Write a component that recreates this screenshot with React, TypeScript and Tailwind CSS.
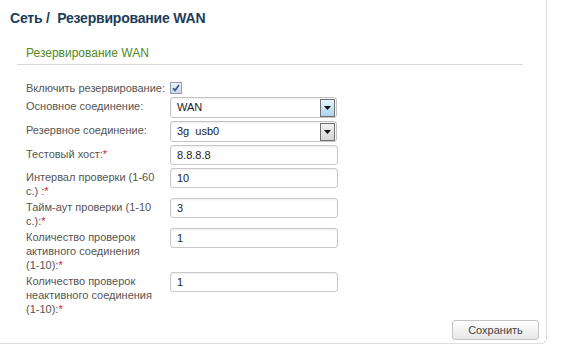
import { type ReactNode } from 'react'

const FONT = { fontFamily: '"Liberation Sans", Arial, sans-serif' }

function Req() {
  return <span className="text-[#d0203a]">*</span>
}

function Row({ label, children }: { label: ReactNode; children: ReactNode }) {
  return (
    <div className="flex items-start">
      <div className="-mb-[2px] w-[140px] shrink-0 pt-[3px] text-[11px] leading-[14px] text-[#555]">
        {label}
      </div>
      <div className="my-[1px] ml-[4px]">{children}</div>
    </div>
  )
}

function TextInput({ value }: { value: string }) {
  return (
    <div className="flex h-[20px] w-[168px] items-center rounded-[3px] border border-[#c9c9c9] bg-white px-[6px] text-[11px] text-[#222] shadow-[inset_0_1px_2px_rgba(0,0,0,0.08)]">
      {value}
    </div>
  )
}

function Select({ value, active }: { value: string; active?: boolean }) {
  return (
    <div className="flex h-[21px] w-[167px] items-center rounded-[3px] border border-[#c4c4c4] bg-white pl-[6px] pr-[1px] text-[11px] text-[#222] shadow-[inset_0_1px_2px_rgba(0,0,0,0.08)]">
      <span className="flex-1 whitespace-pre">{value}</span>
      <span
        className={`flex h-[18px] w-[15px] items-center justify-center border border-[#707070] ${
          active
            ? 'bg-gradient-to-b from-[#e8f4fc] to-[#a9d4f0]'
            : 'bg-gradient-to-b from-[#f2f2f2] to-[#d4d4d4]'
        }`}
      >
        <svg width="7" height="4" viewBox="0 0 7 4">
          <path d="M0 0h7L3.5 4z" fill="#111" />
        </svg>
      </span>
    </div>
  )
}

export default function App() {
  return (
    <div className="h-[361px] w-[566px] bg-white" style={FONT}>
      <div className="h-[344px] w-[547px] rounded-br-[6px] border-r border-b border-[#dedede]">
        <h1 className="pl-[10px] pt-[8px] text-[14px] leading-[20px] font-bold tracking-[-0.2px] text-[#1c3d5a]">
          Сеть /&nbsp; Резервирование WAN
        </h1>

        <div className="ml-[17px] mt-[18px] w-[506px] border-b border-[#d8d8d8] pb-[3px] pl-[9px] text-[12px] leading-[15px] text-[#4f8a24]">
          Резервирование WAN
        </div>

        <div className="mt-[16px] flex flex-col pl-[26px]">
          <div className="flex h-[14px] items-center">
            <div className="w-[140px] shrink-0 whitespace-nowrap text-[11px] leading-[14px] text-[#555]">
              Включить резервирование:
            </div>
            <div className="ml-[4px] flex h-[12px] w-[12px] items-center justify-center border border-[#8aa0b8] bg-gradient-to-b from-[#eef3f8] to-[#c8d6e4]">
              <svg width="8" height="8" viewBox="0 0 8 8">
                <path d="M1 4.2l2 2.2L7 1" fill="none" stroke="#3b4f8c" strokeWidth="1.6" />
              </svg>
            </div>
          </div>
          <div className="mt-[1px] flex flex-col gap-[1px]">
            <Row label="Основное соединение:">
              <Select value="WAN" active />
            </Row>
            <Row label="Резервное соединение:">
              <Select value="3g  usb0" />
            </Row>
            <Row
              label={
                <>
                  Тестовый хост:
                  <Req />
                </>
              }
            >
              <TextInput value="8.8.8.8" />
            </Row>
            <Row
              label={
                <>
                  Интервал проверки (1-60 с.) :<Req />
                </>
              }
            >
              <TextInput value="10" />
            </Row>
            <Row
              label={
                <>
                  Тайм-аут проверки (1-10 с.):<Req />
                </>
              }
            >
              <TextInput value="3" />
            </Row>
            <Row
              label={
                <>
                  Количество проверок активного соединения{' '}
                  <span className="whitespace-nowrap">
                    (1-10):<Req />
                  </span>
                </>
              }
            >
              <TextInput value="1" />
            </Row>
            <Row
              label={
                <>
                  Количество проверок неактивного соединения{' '}
                  <span className="whitespace-nowrap">
                    (1-10):<Req />
                  </span>
                </>
              }
            >
              <TextInput value="1" />
            </Row>
          </div>
        </div>

        <div className="mt-[6px] flex justify-end pr-[7px]">
          <button className="h-[20px] w-[87px] rounded-[3px] border border-[#c4c4c4] bg-gradient-to-b from-white to-[#e6e6e6] text-[11px] text-[#444]">
            Сохранить
          </button>
        </div>
      </div>
    </div>
  )
}
